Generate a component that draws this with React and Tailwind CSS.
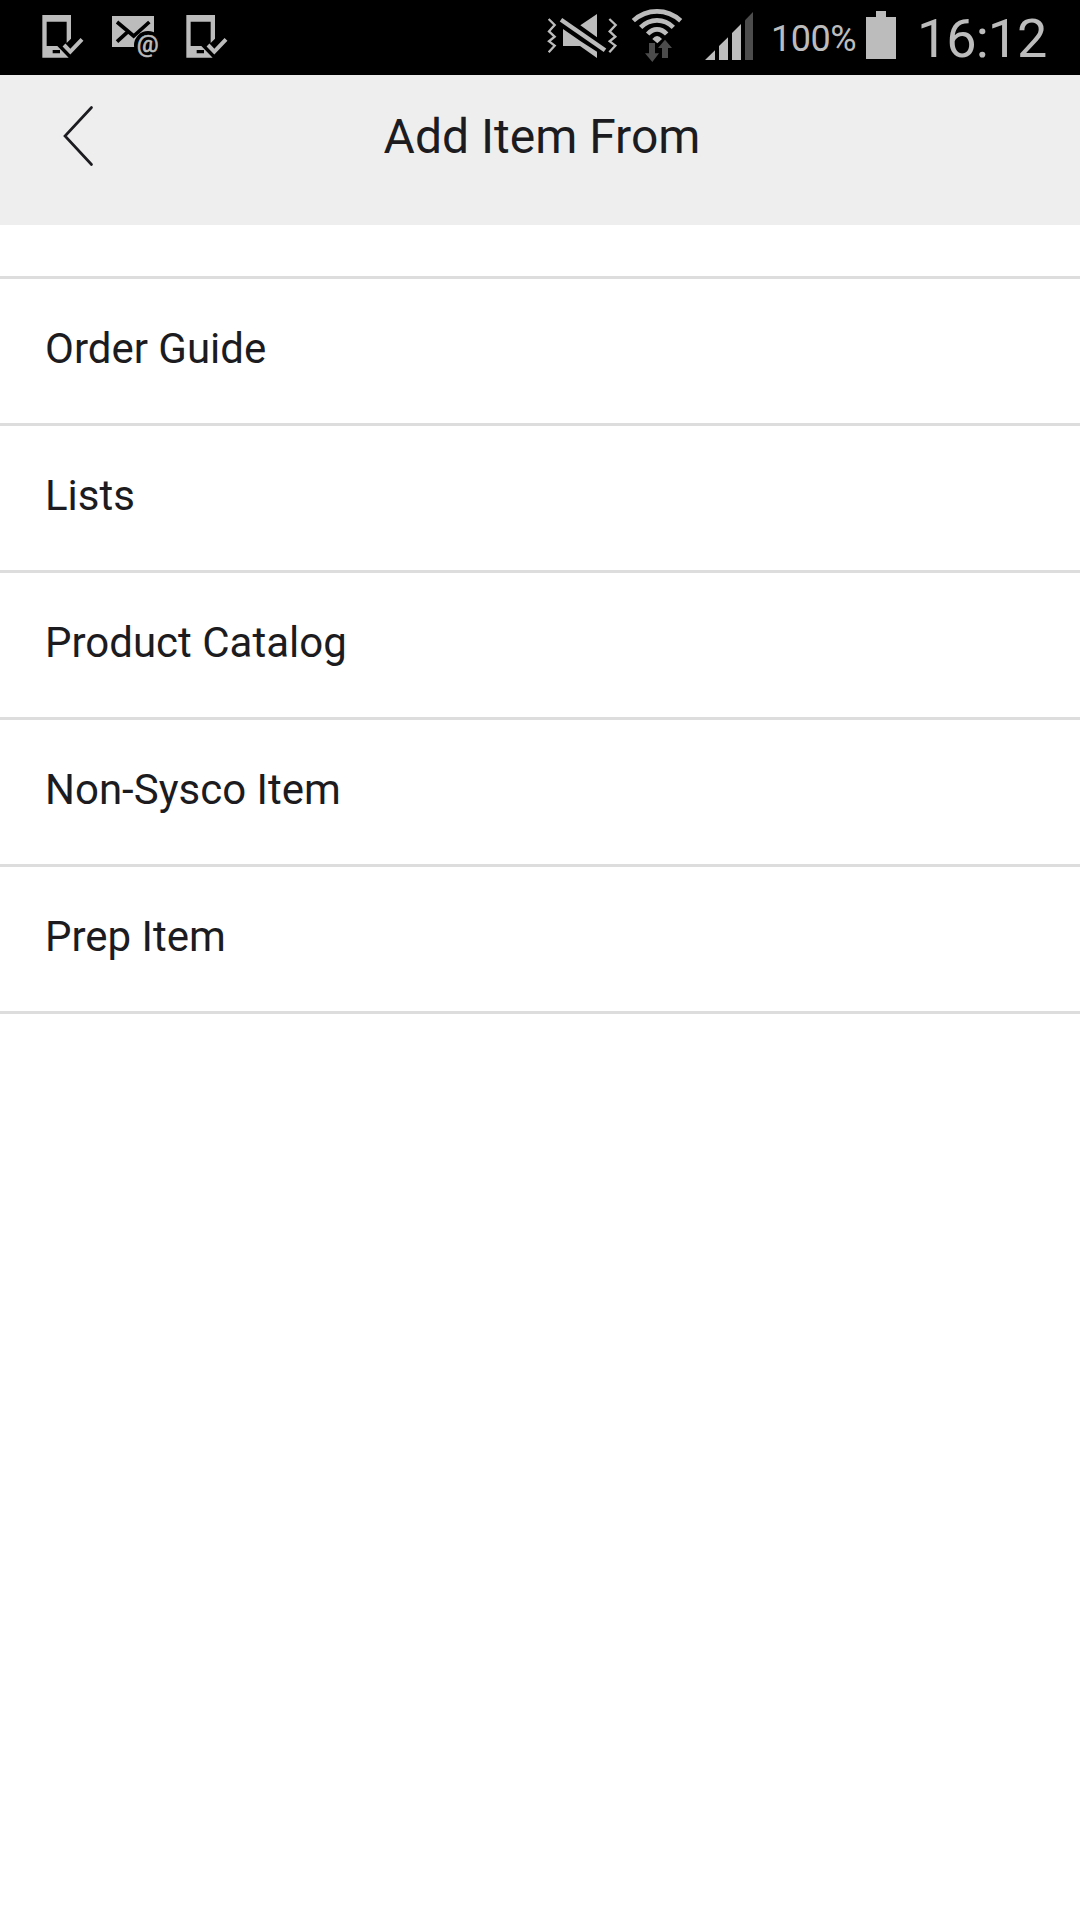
const LIGHT = '#bcbcbc';
const DIM = '#4c4c4c';

// Status icons are drawn on a grid of three units per pixel.
function PhoneCheckIcon({ className }) {
  return (
    <svg className={className} width="42" height="75" viewBox="36 0 126 225">
      <path
        fill={LIGHT}
        fillRule="evenodd"
        d="M37 45H123V116L110 129V65H50V138H82L116 173H37ZM68 150V160H90V150Z"
      />
      <path d="M102 135L121 155L156 118" fill="none" stroke={LIGHT} strokeWidth="12" />
    </svg>
  );
}

function MailIcon({ className }) {
  return (
    <svg className={className} width="48" height="75" viewBox="243 0 144 225">
      <path fill={LIGHT} d="M246 48H372V141H246Z" />
      <path
        d="M261 66L311 108L358 66M261 125L294 95"
        fill="none"
        stroke="#000"
        strokeWidth="11"
      />
      <ellipse cx="354" cy="136" rx="42" ry="43" fill="#000" />
      <text
        x="353"
        y="156"
        textAnchor="middle"
        fontFamily="Roboto"
        fontSize="73"
        fill={LIGHT}
        stroke={LIGHT}
        strokeWidth="2"
      >
        @
      </text>
    </svg>
  );
}

function MuteVibrateIcon({ className }) {
  return (
    <svg className={className} width="72" height="75" viewBox="48 0 216 225">
      <path fill={LIGHT} d="M201 42V112L151 76ZM99 87L152 124L201 155V174L150 138H99Z" />
      <path d="M93 59L225 151" fill="none" stroke={LIGHT} strokeWidth="13" />
      <path
        d="M56 57L74 75L57 94L74 110L57 124L74 137L56 157M238 57L257 75L239 94L256 110L239 124L256 137L238 157"
        fill="none"
        stroke={LIGHT}
        strokeWidth="7"
      />
    </svg>
  );
}

function WifiIcon({ className }) {
  return (
    <svg className={className} width="52" height="75" viewBox="303 0 156 225">
      <g fill="none" stroke={LIGHT} strokeWidth="14">
        <path d="M310 62Q340 34 381 34Q421 34 452 62" />
        <path d="M332 82Q353 61 381 61Q409 61 430 82" />
        <path d="M353 102Q366 88 381 88Q397 88 410 102" />
      </g>
      <path fill={LIGHT} d="M367 117Q381 99 396 117L382 130Z" />
      <path
        fill={DIM}
        d="M357 129H375V160H387L367 186L345 160H357ZM396 174V144H384L405 119L426 144H414V174Z"
      />
    </svg>
  );
}

function SignalIcon({ className }) {
  return (
    <svg className={className} width="50" height="75" viewBox="522 0 150 225">
      <path
        fill={LIGHT}
        d="M525 180L555 151V180ZM567 180V138L594 112V180ZM606 180V99L633 72V180Z"
      />
      <path fill={DIM} d="M645 180V61L669 36V180Z" />
    </svg>
  );
}

function BatteryIcon({ className }) {
  return (
    <svg className={className} width="32" height="75" viewBox="345 0 96 225">
      <path fill={LIGHT} d="M348 51H378V33H408V51H438V177H348Z" />
    </svg>
  );
}

const ITEMS = ['Order Guide', 'Lists', 'Product Catalog', 'Non-Sysco Item', 'Prep Item'];

export default function App() {
  return (
    <div className="min-h-[1920px] w-[1080px] overflow-hidden bg-white font-['Roboto',sans-serif] text-[#1c1c20]">
      <div className="flex h-[75px] bg-black pl-[42px] pr-[31px] text-[#bcbcbc]">
        <PhoneCheckIcon />
        <MailIcon className="ml-[27px]" />
        <PhoneCheckIcon className="ml-[27px]" />
        <div className="ml-auto flex">
          <MuteVibrateIcon />
          <WifiIcon className="ml-[13px]" />
          <SignalIcon className="ml-[21px]" />
          <span className="ml-[17px] w-[94px] whitespace-nowrap pt-[18px] text-[36px] leading-[43px] tracking-[-0.5px]">
            100%
          </span>
          <BatteryIcon />
          <span className="ml-5 w-[132px] whitespace-nowrap pt-[7px] text-[54px] leading-[64px] tracking-[-1px]">
            16:12
          </span>
        </div>
      </div>

      <header className="grid h-[150px] grid-cols-[1fr_auto_1fr] bg-[#eeeeee]">
        <button className="flex pl-[60px] pt-[28px]" aria-label="Back">
          <svg width="36" height="66" viewBox="0 0 36 66">
            <path
              d="M31.5 4.5L5 33L31.5 61.5"
              fill="none"
              stroke="#1c1c20"
              strokeWidth="2.7"
              strokeLinecap="round"
            />
          </svg>
        </button>
        <h1 className="pl-1 pt-[34px] text-[48px] leading-[56px]">Add Item From</h1>
      </header>

      <ul className="mt-[51px] border-t-[3px] border-[#dddddd]">
        {ITEMS.map((item) => (
          <li
            key={item}
            className="flex h-[147px] items-center border-b-[3px] border-[#dddddd] pb-1 pl-[45px] text-[42px] leading-[50px]"
          >
            {item}
          </li>
        ))}
      </ul>
    </div>
  );
}
